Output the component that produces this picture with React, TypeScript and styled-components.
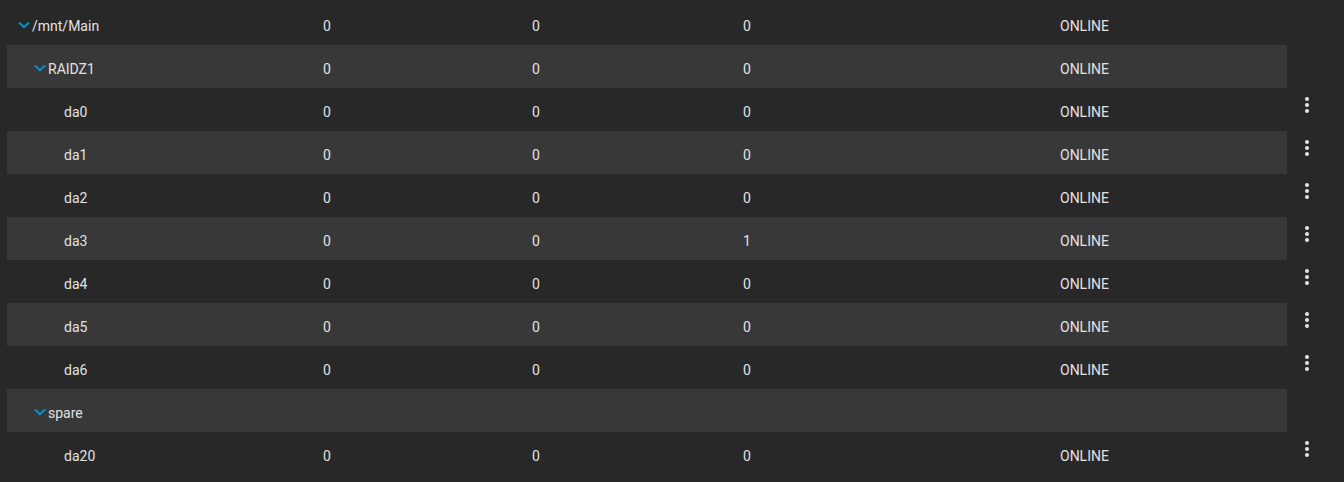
import React from 'react';
import styled, { createGlobalStyle } from 'styled-components';

const GlobalStyle = createGlobalStyle`
  html, body {
    margin: 0;
    padding: 0;
    background-color: #282828;
  }
  body {
    font-family: Roboto, 'Noto Sans', Arial, sans-serif;
    font-size: 14px;
    color: #e2e2e2;
  }
`;

const Table = styled.div`
  display: flex;
  flex-direction: column;
  padding: 2px 0 0 7px;
  min-height: 100vh;
  box-sizing: border-box;
`;

const Row = styled.div`
  display: flex;
  height: 43px;
`;

const Stripe = styled.div<{ $striped: boolean }>`
  display: grid;
  grid-template-columns: 316px 209px 211px 317px 1fr;
  width: 1280px;
  height: 100%;
  box-sizing: border-box;
  padding-top: 5px;
  align-items: center;
  background-color: ${(p) => (p.$striped ? '#383838' : 'transparent')};
`;

const NameCell = styled.div<{ $level: number }>`
  display: flex;
  align-items: center;
  padding-left: ${(p) => 11 + p.$level * 16}px;
`;

const Toggle = styled.span`
  display: inline-flex;
  width: 12px;
  height: 8px;
  margin-right: 2px;
  margin-top: -2px;
  color: #0095d5;
`;

const Cell = styled.div`
  white-space: nowrap;
`;

const ActionCell = styled.div`
  width: 40px;
  display: flex;
  justify-content: center;
  padding-top: 5px;
`;

const KebabButton = styled.span`
  display: inline-flex;
  width: 24px;
  height: 24px;
  color: #e6e6e6;
`;

const Chevron = () => (
  <svg width="12" height="8" viewBox="0 0 12 8">
    <polyline points="1,1.5 6,6.2 11,1.5" fill="none" stroke="currentColor" strokeWidth="2" />
  </svg>
);

const MoreVert = () => (
  <svg width="24" height="24" viewBox="0 0 24 24">
    <circle cx="12" cy="6" r="2" fill="currentColor" />
    <circle cx="12" cy="12" r="2" fill="currentColor" />
    <circle cx="12" cy="18" r="2" fill="currentColor" />
  </svg>
);

type Node = {
  name: string;
  level: number;
  group?: boolean;
  read?: string;
  write?: string;
  checksum?: string;
  status?: string;
};

const disk = (name: string, checksum = '0'): Node => ({
  name,
  level: 2,
  read: '0',
  write: '0',
  checksum,
  status: 'ONLINE',
});

const rows: Node[] = [
  { name: '/mnt/Main', level: 0, group: true, read: '0', write: '0', checksum: '0', status: 'ONLINE' },
  { name: 'RAIDZ1', level: 1, group: true, read: '0', write: '0', checksum: '0', status: 'ONLINE' },
  disk('da0'),
  disk('da1'),
  disk('da2'),
  disk('da3', '1'),
  disk('da4'),
  disk('da5'),
  disk('da6'),
  { name: 'spare', level: 1, group: true },
  disk('da20'),
];

export default function App(): JSX.Element {
  return (
    <>
      <GlobalStyle />
      <Table>
        {rows.map((r, i) => (
          <Row key={r.name}>
            <Stripe $striped={i % 2 === 1}>
              <NameCell $level={r.level}>
                {r.group ? (
                  <Toggle>
                    <Chevron />
                  </Toggle>
                ) : (
                  <Toggle />
                )}
                {r.name}
              </NameCell>
              <Cell>{r.read}</Cell>
              <Cell>{r.write}</Cell>
              <Cell>{r.checksum}</Cell>
              <Cell>{r.status}</Cell>
            </Stripe>
            {!r.group && (
              <ActionCell>
                <KebabButton>
                  <MoreVert />
                </KebabButton>
              </ActionCell>
            )}
          </Row>
        ))}
      </Table>
    </>
  );
}
